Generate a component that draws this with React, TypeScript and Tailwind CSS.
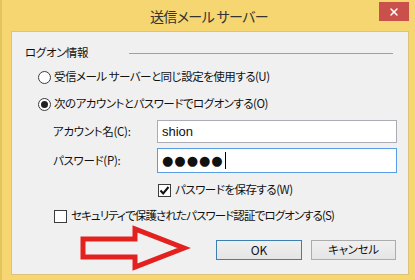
import React from 'react'
import { X } from 'lucide-react'

const jp = "font-['Meiryo_UI','Noto_Sans_CJK_JP',sans-serif] [font-feature-settings:'palt']"
const txt = 'text-[11.5px] text-[#111] leading-none whitespace-nowrap'

const Radio = ({ checked, label }: { checked?: boolean; label: string }) => (
  <div className="flex items-center h-[20px]">
    <span className="w-[13px] h-[13px] rounded-full border border-[#3c3c3c] bg-white flex items-center justify-center">
      {checked && <span className="w-[7px] h-[7px] rounded-full bg-[#222]" />}
    </span>
    <span className={`ml-[3px] tracking-[-0.5px] ${txt}`}>{label}</span>
  </div>
)

const Checkbox = ({ checked, label, tight }: { checked?: boolean; label: string; tight?: boolean }) => (
  <div className="flex items-center h-[14px]">
    <span className="w-[13px] h-[13px] border border-[#3c3c3c] bg-white flex items-center justify-center shrink-0">
      {checked && (
        <svg width="11" height="11" viewBox="0 0 11 11">
          <path d="M1.5 5.5 L4.2 8.5 L9.5 2" fill="none" stroke="#111" strokeWidth="2" />
        </svg>
      )}
    </span>
    <span className={`ml-[4px] ${tight ? 'tracking-[-0.9px]' : 'tracking-[-0.5px]'} ${txt}`}>{label}</span>
  </div>
)

export default function App() {
  return (
    <div className={`w-[415px] h-[280px] bg-[#f5d670] border-l-2 border-[#e2c45c] flex flex-col ${jp}`}>
      {/* title bar */}
      <div className="relative h-[31px] flex items-center justify-center shrink-0">
        <span className="text-[14px] tracking-[-0.6px] text-[#333] mt-[1px] ml-[1px]">送信メール サーバー</span>
        <div className="absolute left-[377px] top-[2px] w-[30px] h-[19px] bg-[#c9504b] flex items-center justify-center">
          <X className="w-[12px] h-[12px] text-white" strokeWidth={3} />
        </div>
      </div>

      {/* client area */}
      <div className="relative ml-[9px] mr-[6px] h-[244px] bg-[#f0f0f0] border border-[#dcc27a]">
        <div className="pl-[13px] pr-[11px] pt-[12px]">
          <div className="flex items-center h-[18px]">
            <span className={`w-[104px] tracking-[-0.4px] ${txt}`}>ログオン情報</span>
            <div className="flex-1 h-px bg-[#a0a0a0] mr-[4px]" />
          </div>

          <div className="ml-[13px] mt-[5px] flex flex-col gap-[7px]">
            <Radio label="受信メール サーバーと同じ設定を使用する(U)" />
            <Radio checked label="次のアカウントとパスワードでログオンする(O)" />
          </div>

          <div className="ml-[28px] mt-[6px] flex flex-col gap-[5px]">
            <div className="flex items-center">
              <span className={`w-[104px] tracking-[-0.3px] ${txt}`}>アカウント名(C):</span>
              <div className="flex-1 h-[23px] bg-white border border-[#abadb3] flex items-center px-[4px] text-[13px] text-[#111] font-['Segoe_UI','Liberation_Sans',sans-serif]">
                shion
              </div>
            </div>
            <div className="flex items-center">
              <span className={`w-[104px] tracking-[-0.3px] ${txt}`}>パスワード(P):</span>
              <div className="flex-1 h-[25px] bg-white border border-[#569de5] flex items-center px-[4px]">
                <span className="text-[13px] tracking-[1px] text-[#111] font-['DejaVu_Sans',sans-serif]">●●●●●</span>
                <span className="w-px h-[17px] bg-black ml-[1px]" />
              </div>
            </div>
          </div>

          <div className="ml-[133px] mt-[10px]">
            <Checkbox checked label="パスワードを保存する(W)" />
          </div>
          <div className="ml-[29px] mt-[12px]">
            <Checkbox tight label="セキュリティで保護されたパスワード認証でログオンする(S)" />
          </div>

          <div className="flex justify-end gap-[9px] mt-[17px] mr-[1px]">
            <button className="w-[86px] h-[20px] border border-[#3c7fb1] bg-gradient-to-b from-[#f0f0f0] to-[#e5e5e5] text-[12px] text-[#111] leading-none">
              OK
            </button>
            <button className={`w-[85px] h-[20px] border border-[#acacac] bg-gradient-to-b from-[#f0f0f0] to-[#e5e5e5] tracking-[-0.3px] ${txt}`}>
              キャンセル
            </button>
          </div>
        </div>

        {/* annotation arrow */}
        <svg className="absolute left-[66px] top-[192px]" width="120" height="50" viewBox="0 0 120 50">
          <polygon
            points="5,15 57,15 57,5 106,24 57,43 57,33 5,33"
            fill="none"
            stroke="#e3221f"
            strokeWidth="5"
            strokeLinejoin="miter"
          />
        </svg>
      </div>
    </div>
  )
}
